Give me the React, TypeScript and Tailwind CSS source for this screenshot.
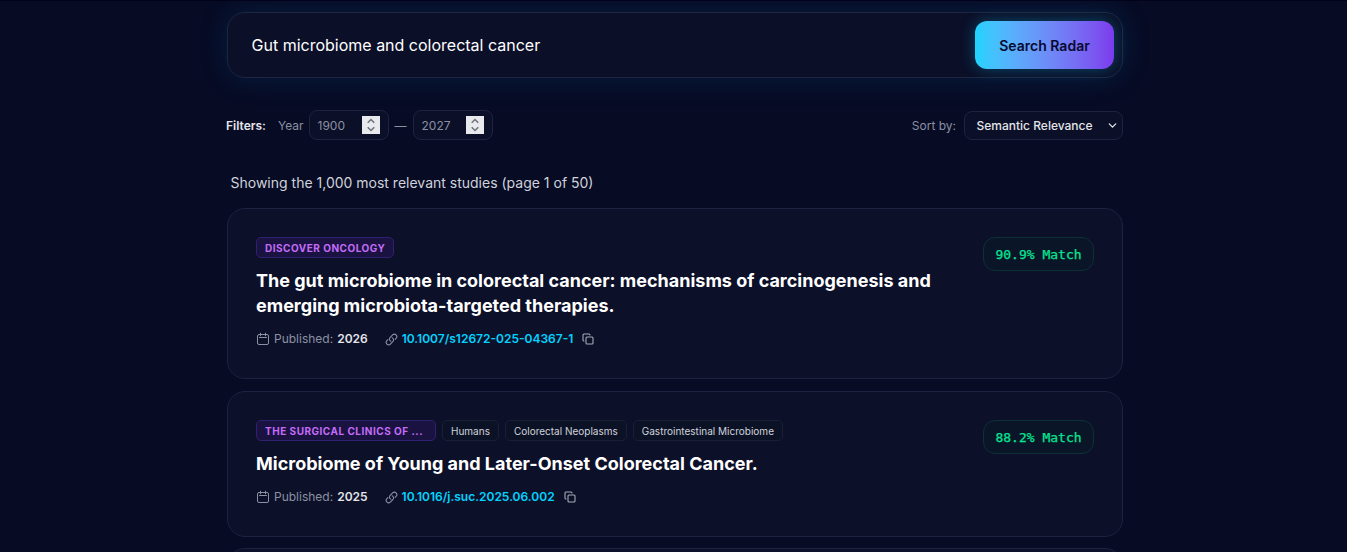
import { ChevronDown, Copy } from 'lucide-react';

type Study = {
  journal: string;
  tags: string[];
  title: string;
  year: string;
  doi: string;
  match: string;
};

const studies: Study[] = [
  {
    journal: 'DISCOVER ONCOLOGY',
    tags: [],
    title:
      'The gut microbiome in colorectal cancer: mechanisms of carcinogenesis and emerging microbiota-targeted therapies.',
    year: '2026',
    doi: '10.1007/s12672-025-04367-1',
    match: '90.9%',
  },
  {
    journal: 'THE SURGICAL CLINICS OF ...',
    tags: ['Humans', 'Colorectal Neoplasms', 'Gastrointestinal Microbiome'],
    title: 'Microbiome of Young and Later-Onset Colorectal Cancer.',
    year: '2025',
    doi: '10.1016/j.suc.2025.06.002',
    match: '88.2%',
  },
];

const CalendarIcon = () => (
  <svg width="14" height="14" viewBox="0 0 14 14" fill="none" stroke="currentColor" strokeLinecap="round">
    <rect x="1.5" y="2.5" width="11" height="10" rx="1.5" />
    <path d="M4.5 1.2v2.6M9.5 1.2v2.6M3.5 5.5h7" />
  </svg>
);

const LinkIcon = () => (
  <svg
    width="13"
    height="13"
    viewBox="0 0 24 24"
    fill="none"
    stroke="currentColor"
    strokeWidth="2"
    strokeLinecap="round"
    strokeLinejoin="round"
  >
    <path d="M13.19 8.688a4.5 4.5 0 0 1 1.242 7.244l-4.5 4.5a4.5 4.5 0 0 1-6.364-6.364l1.757-1.757m13.35-.622 1.757-1.757a4.5 4.5 0 0 0-6.364-6.364l-4.5 4.5a4.5 4.5 0 0 0 1.242 7.244" />
  </svg>
);

const YearInput = ({ value }: { value: string }) => (
  <div className="flex h-[30px] w-20 items-center justify-between rounded-lg border border-[#1f2340] bg-[#0b0f28] px-2 text-xs text-[#8b90a3]">
    <span className="pt-0.5">{value}</span>
    <span className="flex h-[18px] w-[18px] items-center justify-center bg-[#e9eaee] text-[#70737a]">
      <svg width="18" height="18" viewBox="0 0 18 18" fill="none" stroke="currentColor" strokeWidth="1.5">
        <path d="M5.7 6.8 9 3.5l3.3 3.3M5.7 11.2 9 14.5l3.3-3.3" />
      </svg>
    </span>
  </div>
);

const StudyCard = ({ study }: { study: Study }) => (
  <div className="flex items-start justify-between rounded-[18px] border border-[#1e2240] bg-[#0d1029] px-7 pt-7 pb-[28.8px]">
    <div className="w-[700px]">
      <div className="flex h-[21px] gap-1.5">
        <span
          className={`rounded-[5px] border border-[#2f2070] bg-[#1a1341] px-2 text-[10px] leading-5 font-bold tracking-[0.5px] whitespace-nowrap text-[#c46cf8] ${
            study.tags.length > 0 ? 'w-[180px]' : ''
          }`}
        >
          {study.journal}
        </span>
        {study.tags.map((tag) => (
          <span
            key={tag}
            className="rounded-[5px] border border-[#1a1f38] bg-[#0c1226] px-2 text-[10px] leading-5 whitespace-nowrap text-[#d0d2da]"
          >
            {tag}
          </span>
        ))}
      </div>
      <h3 className="mt-[10px] text-[18px] leading-[25.2px] font-bold text-white">{study.title}</h3>
      <div className="mt-[11px] flex h-5 items-center text-xs text-[#8b90a3]">
        <CalendarIcon />
        <span className="ml-1">Published:</span>
        <span className="ml-1 font-semibold text-[#e4e5ea]">{study.year}</span>
        <span className="ml-[17px] flex">
          <LinkIcon />
        </span>
        <a className="mr-[9px] ml-1 font-semibold text-[#00d4ff]">{study.doi}</a>
        <Copy size={12} strokeWidth={2.2} className="text-[#a5a9b8]" />
      </div>
    </div>
    <div className="flex h-[34px] w-[111px] items-center justify-center rounded-xl border border-[#0b3038] bg-[#0a1628] pt-0.5 font-['DejaVu_Sans_Mono',monospace] text-[13px] text-[#05e693] [-webkit-text-stroke:0.25px_#05e693]">
      {study.match} Match
    </div>
  </div>
);

const App = () => {
  return (
    <div className="h-[552px] overflow-hidden border-t border-[#02031a] bg-[#070b24] font-['Inter',sans-serif]">
      <div className="mt-[11px] ml-[227px] w-[896px]">
        <div className="flex h-[66px] items-center justify-between rounded-[18px] border border-[#1e2541] bg-[#0b0f28] pr-2 pl-[23.5px] shadow-[0_0_30px_rgba(0,150,230,0.15)]">
          <span className="text-base text-white">Gut microbiome and colorectal cancer</span>
          <button className="h-12 w-[139px] rounded-xl bg-linear-to-r from-[#1cd3ff] to-[#7c3aed] pt-0.5 text-sm font-semibold text-[#060a30] shadow-[0_0_15px_rgba(0,212,255,0.3)]">
            Search Radar
          </button>
        </div>

        <div className="mt-8 flex h-[30px] items-center justify-between text-xs text-[#8b90a3]">
          <div className="-ml-px flex items-center">
            <span className="pt-0.5 font-semibold text-[#e4e5ea]">Filters:</span>
            <span className="mr-[5px] ml-3 pt-0.5">Year</span>
            <YearInput value="1900" />
            <span className="mx-1.5 pt-0.5">—</span>
            <YearInput value="2027" />
          </div>
          <div className="flex items-center gap-2">
            <span className="pt-0.5">Sort by:</span>
            <div className="mt-px flex h-[29px] w-[159px] items-center justify-between rounded-lg border border-[#1f2340] bg-[#0b0f28] pr-[3px] pl-[11.5px] font-medium text-[#e4e5ea]">
              <span>Semantic Relevance</span>
              <ChevronDown size={13} strokeWidth={2.4} />
            </div>
          </div>
        </div>

        <p className="mt-8 ml-[3.5px] h-[22px] text-sm leading-[22px] text-[#d0d2da]">
          Showing the 1,000 most relevant studies (page 1 of 50)
        </p>

        <div className="mt-[14px] flex flex-col gap-[11.6px]">
          {studies.map((study) => (
            <StudyCard key={study.doi} study={study} />
          ))}
          <div className="h-20 rounded-[18px] border border-[#1e2240] bg-[#0d1029]" />
        </div>
      </div>
    </div>
  );
};

export default App;
